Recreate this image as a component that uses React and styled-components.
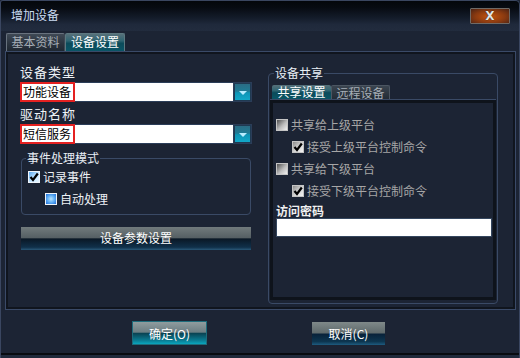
import React from 'react';
import styled, { createGlobalStyle, css } from 'styled-components';

const GlobalStyle = createGlobalStyle`
  html, body { margin: 0; padding: 0; background: #1c2434; }
  body { font-family: "Noto Sans CJK SC", "Noto Sans", sans-serif; font-size: 12px; }
  * { box-sizing: border-box; }
`;

const Window = styled.div`
  width: 520px;
  height: 358px;
  display: flex;
  flex-direction: column;
  background: #1c2434;
  border: 1px solid #3a4660;
  border-bottom: none;
  border-radius: 3px 5px 0 0;
  overflow: hidden;
`;

const TitleBar = styled.div`
  height: 30px;
  flex: none;
  display: flex;
  align-items: flex-start;
  padding: 7px 9px 0 10px;
  background: linear-gradient(180deg, #04070b 0%, #070b12 22%, #131b29 55%, #1f293b 78%, #222c3e 100%);
`;

const Title = styled.div`
  line-height: 14px;
  font-size: 12px;
  color: #c9daf0;
`;

const CloseButton = styled.div`
  margin-left: auto;
  width: 40px;
  height: 16px;
  border: 1px solid #6f6a66;
  border-radius: 1px;
  background: radial-gradient(ellipse at 50% 55%, #c4540f 0%, #8a3a10 55%, #4a2214 100%);
  display: flex;
  align-items: center;
  justify-content: center;
  color: #e4e4e4;
  font-family: "DejaVu Sans", sans-serif;
  font-weight: bold;
  font-size: 12px;
  line-height: 14px;
  text-shadow: 0 0 1px #000;
`;

const TabStrip = styled.div`
  flex: none;
  display: flex;
  align-items: flex-end;
  height: 18px;
  margin-top: 2px;
  padding-left: 5px;
`;

const MainTab = styled.div`
  width: ${p => p.$w}px;
  height: 18px;
  border: 1px solid;
  border-bottom: none;
  border-radius: 2px 2px 0 0;
  text-align: center;
  line-height: 16px;
  font-size: 12px;
  ${p => p.$active ? css`
    color: #ffffff;
    border-color: #5d7880;
    background: linear-gradient(180deg, #56707a 0%, #2f6572 40%, #0b4b5a 55%, #0a5566 100%);
  ` : css`
    color: #a6aeb6;
    border-color: #68727e #3e4854 #3e4854 #68727e;
    background: linear-gradient(180deg, #3f4955 0%, #2a333e 60%, #1f2731 100%);
  `}
`;

const Panel = styled.div`
  flex: none;
  height: 259px;
  margin: 0 3px 0 4px;
  border: 1px solid #3a4a68;
  box-shadow: inset 0 0 0 2px #10151e;
  display: flex;
  align-items: flex-start;
  gap: 16px;
  padding: 13px 17px 0 14px;
`;

const LeftColumn = styled.div`
  width: 232px;
  display: flex;
  flex-direction: column;
`;

const FieldLabel = styled.div`
  font-size: 13px;
  letter-spacing: 1px;
  line-height: 14px;
  color: #eef2f6;
  margin-top: ${p => p.$mt || 0}px;
  margin-bottom: 3px;
`;

const Dropdown = styled.div`
  height: 20px;
  display: flex;
  background: #2b3d58;
  padding: 1px;
  gap: 1px;
`;

const DropField = styled.div`
  flex: 1;
  background: #ffffff;
  display: flex;
  align-items: center;
`;

const DropValue = styled.span`
  height: 20px;
  margin: -1px 0 -1px ${p => p.$ml || -1}px;
  border: 2px solid #e42121;
  padding: 0 2px 0 1px;
  line-height: 16px;
  font-size: 12px;
  color: #000;
`;

const DropArrow = styled.div`
  width: 17px;
  border: 1px solid #1f3a52;
  background: linear-gradient(180deg, #2b6c84 0%, #1f7b95 45%, #0e95b6 55%, #12a8c8 100%);
  display: flex;
  align-items: center;
  justify-content: center;
  padding-top: 2px;
`;

const Triangle = styled.span`
  width: 0;
  height: 0;
  border-left: 4px solid transparent;
  border-right: 4px solid transparent;
  border-top: 4px solid #b8ecff;
`;

const Group = styled.fieldset`
  margin: ${p => p.$margin};
  padding: ${p => p.$padding};
  border: 1px solid #3a4a66;
  border-radius: 4px;
  min-width: 0;
  width: ${p => p.$w}px;
  ${p => p.$h && css`height: ${p.$h}px;`}
`;

const Legend = styled.legend`
  padding: 0 1px;
  margin-left: ${p => p.$ml}px;
  font-size: 12px;
  line-height: 14px;
  color: #e8eef4;
`;

const CheckRow = styled.div`
  height: 14px;
  display: flex;
  align-items: center;
  gap: 3px;
  margin-top: ${p => p.$mt}px;
  padding-left: ${p => p.$indent || 0}px;
  font-size: 12px;
  line-height: 14px;
  color: ${p => p.$disabled ? '#a6a6a6' : '#eef2f6'};
`;

const Box = styled.span`
  width: 12px;
  height: 12px;
  flex: none;
  display: flex;
  align-items: center;
  justify-content: center;
  ${p => p.$disabled ? css`
    border: 1px solid #c4c4c4;
    background: ${p.$checked
      ? 'linear-gradient(135deg, #8a8a8a 0%, #d6d6d6 55%, #f2f2f2 100%)'
      : 'linear-gradient(135deg, #505050 0%, #bcbcbc 55%, #f0f0f0 100%)'};
  ` : css`
    border: 1px solid #eef4fa;
    background: ${p.$checked
      ? 'linear-gradient(135deg, #5aa8f0 0%, #c4e6ff 55%, #e6f4ff 100%)'
      : 'radial-gradient(circle, #b8e4ff 0%, #58a8f2 55%, #1f6cd8 100%)'};
  `}
`;

const Check = ({ checked, disabled }) => (
  <Box $checked={checked} $disabled={disabled}>
    {checked && (
      <svg width="10" height="10" viewBox="0 0 10 10">
        <path d="M1.5 5 L4 8 L8.8 1.5" fill="none" stroke="#000" strokeWidth="2.2" />
      </svg>
    )}
  </Box>
);

const ParamButton = styled.div`
  margin: 12px 1px 0;
  height: 23px;
  text-align: center;
  line-height: 22px;
  font-size: 12px;
  color: #ffffff;
  background: linear-gradient(180deg, #717a7c 0%, #566064 46%, #0a1826 52%, #10304a 88%, #2a5878 100%);
`;

const InnerTabStrip = styled.div`
  display: flex;
  height: 15px;
  margin-top: 5px;
  padding-left: 2px;
  border-bottom: 1px solid #3a4a66;
`;

const InnerTab = styled.div`
  width: 59px;
  height: 14px;
  text-align: center;
  line-height: 14px;
  font-size: 12px;
  border-radius: 2px 2px 0 0;
  ${p => p.$active ? css`
    color: #ffffff;
    background: linear-gradient(180deg, #56707a 0%, #2f6572 40%, #0b4b5a 55%, #0a5566 100%);
  ` : css`
    color: #a6aeb6;
    border: 1px solid #4c5662;
    border-bottom: none;
    background: linear-gradient(180deg, #3a444f 0%, #232b35 100%);
  `}
`;

const InnerPanel = styled.div`
  height: 200px;
  border: 3px solid #0e131b;
  padding: 15px 1px 0 3px;
  display: flex;
  flex-direction: column;
`;

const PwdLabel = styled.div`
  margin-top: 6px;
  line-height: 14px;
  font-size: 12px;
  font-weight: bold;
  color: #f0f0f0;
`;

const TextInput = styled.div`
  height: 19px;
  background: #ffffff;
  border: 1px solid #34465e;
`;

const Footer = styled.div`
  flex: none;
  height: 43px;
  display: flex;
  align-items: flex-start;
  gap: 105px;
  padding: 11px 0 0 131px;
`;

const FooterButton = styled.div`
  width: ${p => p.$w}px;
  height: ${p => p.$h}px;
  margin-top: ${p => p.$mt || 0}px;
  display: flex;
  align-items: center;
  justify-content: center;
  font-size: 12px;
  color: #ffffff;
  ${p => p.$primary ? css`
    border: 1px solid #1d6c7c;
    background: linear-gradient(180deg, #8f9c9e 0%, #6c7e83 46%, #0a4454 52%, #0a7f96 85%, #0aa6be 100%);
  ` : css`
    background: linear-gradient(180deg, #7f8989 0%, #5f6a6c 47%, #08223a 53%, #0d3650 85%, #1e5c80 100%);
  `}
`;

const BottomEdge = styled.div`
  flex: 1;
  border-top: 2px solid #080b10;
  background: #202a3b;
`;

export default function App() {
  return (
    <>
      <GlobalStyle />
      <Window>
        <TitleBar>
          <Title>增加设备</Title>
          <CloseButton>X</CloseButton>
        </TitleBar>
        <TabStrip>
          <MainTab $w={59}>基本资料</MainTab>
          <MainTab $w={60} $active>设备设置</MainTab>
        </TabStrip>
        <Panel>
          <LeftColumn>
            <FieldLabel>设备类型</FieldLabel>
            <Dropdown>
              <DropField>
                <DropValue>功能设备</DropValue>
              </DropField>
              <DropArrow><Triangle /></DropArrow>
            </Dropdown>
            <FieldLabel $mt={5}>驱动名称</FieldLabel>
            <Dropdown>
              <DropField>
                <DropValue $ml={0}>短信服务</DropValue>
              </DropField>
              <DropArrow><Triangle /></DropArrow>
            </Dropdown>
            <Group $w={230} $margin="7px 1px 0" $padding="0 6px 8px">
              <Legend $ml={-2}>事件处理模式</Legend>
              <CheckRow $mt={5}>
                <Check checked />
                <span>记录事件</span>
              </CheckRow>
              <CheckRow $mt={8} $indent={17}>
                <Check />
                <span>自动处理</span>
              </CheckRow>
            </Group>
            <ParamButton>设备参数设置</ParamButton>
          </LeftColumn>
          <Group $w={230} $h={238} $margin="1px 0 0" $padding="0 1px 2px">
            <Legend $ml={4}>设备共享</Legend>
            <InnerTabStrip>
              <InnerTab $active>共享设置</InnerTab>
              <InnerTab>远程设备</InnerTab>
            </InnerTabStrip>
            <InnerPanel>
              <CheckRow $mt={0} $disabled>
                <Check disabled />
                <span>共享给上级平台</span>
              </CheckRow>
              <CheckRow $mt={8} $indent={16} $disabled>
                <Check disabled checked />
                <span>接受上级平台控制命令</span>
              </CheckRow>
              <CheckRow $mt={8} $disabled>
                <Check disabled />
                <span>共享给下级平台</span>
              </CheckRow>
              <CheckRow $mt={8} $indent={16} $disabled>
                <Check disabled checked />
                <span>接受下级平台控制命令</span>
              </CheckRow>
              <PwdLabel>访问密码</PwdLabel>
              <TextInput />
            </InnerPanel>
          </Group>
        </Panel>
        <Footer>
          <FooterButton $primary $w={75} $h={24}>确定(O)</FooterButton>
          <FooterButton $w={73} $h={23} $mt={1}>取消(C)</FooterButton>
        </Footer>
        <BottomEdge />
      </Window>
    </>
  );
}
